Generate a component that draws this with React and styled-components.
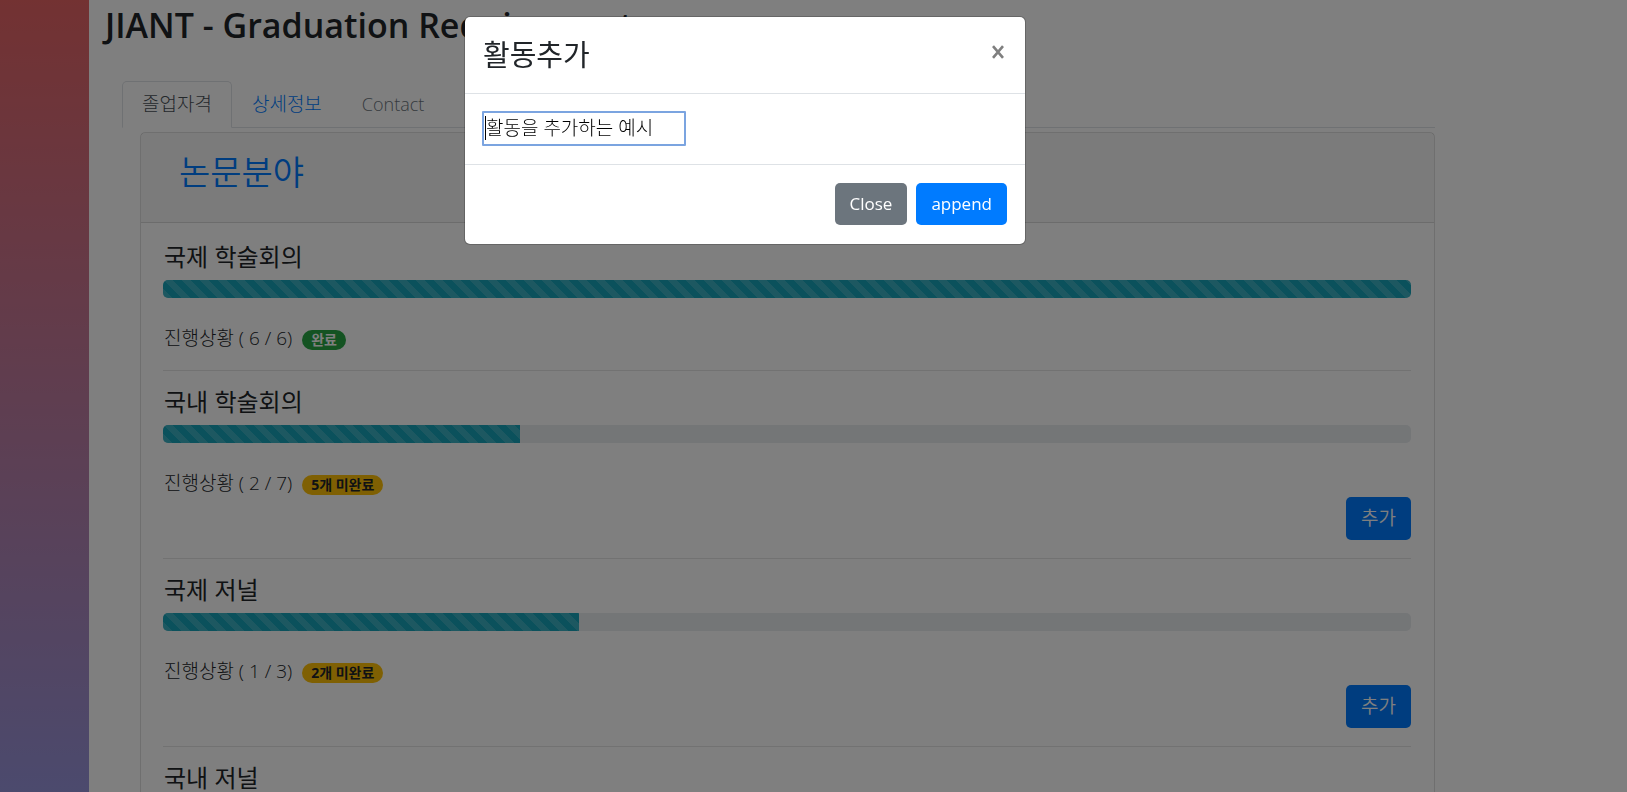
import React, { useEffect, useRef } from "react";
import styled, { createGlobalStyle, css } from "styled-components";

const GlobalStyle = createGlobalStyle`
  *, *::before, *::after { box-sizing: border-box; }
  body {
    margin: 0;
    height: 100vh;
    overflow: hidden;
    background: #fff;
    color: #212529;
    font-family: "Open Sans", "Noto Sans CJK KR", sans-serif;
    font-size: 18px;
    line-height: 27px;
  }
`;

const Page = styled.div`
  display: flex;
  height: 100vh;
  overflow: hidden;
`;

const Sidebar = styled.aside`
  flex: 0 0 89px;
  background: linear-gradient(#e66465, #9198e5 108%);
`;

const Main = styled.main`
  flex: 1;
  min-width: 0;
  padding: 3px 192px 0 15px;
`;

const PageTitle = styled.h1`
  margin: 0 0 34px 1px;
  font-size: 34px;
  font-weight: 600;
  line-height: 44px;
  white-space: nowrap;
`;

const Tabs = styled.nav`
  display: flex;
  margin: 0 0 4px 18px;
  border-bottom: 1px solid #dee2e6;
`;

const Tab = styled.a`
  margin-bottom: -1px;
  padding: 9px 19px;
  border: 1px solid transparent;
  border-radius: 5px 5px 0 0;
  color: #007bff;
  font-size: ${(p) => (p.$latin ? 18 : 19)}px;
  font-weight: 300;
  line-height: 27px;
  text-decoration: none;
  ${(p) => p.$disabled && css`color: #6c757d;`}
  ${(p) =>
    p.$active &&
    css`
      color: #495057;
      background: #fff;
      border-color: #dee2e6 #dee2e6 #fff;
    `}
`;

const Card = styled.section`
  margin-left: 36px;
  border: 1px solid rgba(0, 0, 0, 0.125);
  border-radius: 5px;
`;

const CardHeader = styled.header`
  height: 90px;
  padding: 14px 22px;
  background: rgba(0, 0, 0, 0.03);
  border-bottom: 1px solid rgba(0, 0, 0, 0.125);
`;

const HeaderButton = styled.button`
  padding: 6px 15px;
  border: 1px solid transparent;
  background: transparent;
  color: #007bff;
  font-family: inherit;
  font-size: 34px;
  font-weight: 350;
  line-height: 36px;
`;

const CardBody = styled.div`
  padding: 20px 23px 20px 22px;
`;

const Item = styled.article`
  & + & {
    margin-top: 18px;
    padding-top: 17px;
    border-top: 1px solid rgba(0, 0, 0, 0.1);
  }
`;

const ItemTitle = styled.h2`
  margin: 0 0 10px 1px;
  font-size: 24px;
  font-weight: 400;
  line-height: 27px;
`;

const Track = styled.div`
  height: 18px;
  margin-bottom: 27px;
  overflow: hidden;
  background: #e9ecef;
  border-radius: 5px;
`;

const Bar = styled.div`
  height: 100%;
  background: #17a2b8
    linear-gradient(
      45deg,
      rgba(255, 255, 255, 0.15) 25%,
      transparent 25%,
      transparent 50%,
      rgba(255, 255, 255, 0.15) 50%,
      rgba(255, 255, 255, 0.15) 75%,
      transparent 75%,
      transparent
    );
  background-size: 18px 18px;
`;

const Status = styled.p`
  display: flex;
  align-items: center;
  gap: 10px;
  margin: 0 0 0 1px;
  font-size: 19px;
  font-weight: 300;
  line-height: 27px;
`;

const Badge = styled.span`
  margin-top: 2px;
  padding: 0 9px;
  border-radius: 10px;
  background: ${(p) => (p.$done ? "#28a745" : "#ffc107")};
  color: ${(p) => (p.$done ? "#fff" : "#212529")};
  font-size: 14px;
  font-weight: 700;
  line-height: 20px;
`;

const Actions = styled.div`
  display: flex;
  justify-content: flex-end;
`;

const Button = styled.button`
  padding: 7px 14px;
  border: 1px solid transparent;
  border-radius: 5px;
  background: ${(p) => (p.$secondary ? "#6c757d" : "#007bff")};
  color: #fff;
  font-family: inherit;
  font-size: 17px;
  line-height: 26px;
`;

const AddButton = styled(Button)`
  font-size: 19px;
  font-weight: 350;
  line-height: 27px;
`;

const Backdrop = styled.div`
  position: fixed;
  inset: 0;
  padding: 16px 137px 16px 0;
  background: rgba(0, 0, 0, 0.5);
`;

const Dialog = styled.div`
  max-width: 562px;
  margin: 0 auto;
  background: #fff;
  background-clip: padding-box;
  border: 1px solid rgba(0, 0, 0, 0.2);
  border-radius: 6px;
`;

const DialogHeader = styled.header`
  display: flex;
  justify-content: space-between;
  align-items: flex-start;
  padding: 18px;
  border-bottom: 1px solid #dee2e6;
`;

const DialogTitle = styled.h2`
  margin: 0;
  font-size: 29px;
  font-weight: 400;
  line-height: 40px;
`;

const CloseIcon = styled.button`
  display: flex;
  padding: 10px 3px;
  border: 0;
  background: transparent;
  color: #7f7f7f;
`;

const DialogBody = styled.div`
  display: flex;
  padding: 17px 17px 18px;
`;

/* The text cursor is painted at the start of the field so that it does not blink. */
const TextInput = styled.input`
  width: 204px;
  height: 35px;
  padding: 0 2px 4px;
  border: 2px solid #7ba4e0;
  border-radius: 1px;
  outline: none;
  background: linear-gradient(#000, #000) 1px 3px / 1px 24px no-repeat #fff;
  caret-color: transparent;
  color: #000;
  font-family: inherit;
  font-size: 19px;
  font-weight: 300;
`;

const DialogFooter = styled.footer`
  display: flex;
  justify-content: flex-end;
  gap: 9px;
  padding: 18px 18px 19px;
  border-top: 1px solid #dee2e6;
`;

const items = [
  { name: "국제 학술회의", done: 6, total: 6 },
  { name: "국내 학술회의", done: 2, total: 7 },
  { name: "국제 저널", done: 1, total: 3 },
  { name: "국내 저널", done: 1, total: 3 },
];

function Requirement({ name, done, total }) {
  const complete = done === total;
  return (
    <Item>
      <ItemTitle>{name}</ItemTitle>
      <Track role="progressbar" aria-label={name} aria-valuenow={done} aria-valuemax={total}>
        <Bar style={{ width: `${(done / total) * 100}%` }} />
      </Track>
      <Status>
        {`진행상황 ( ${done} / ${total})`}
        <Badge $done={complete}>{complete ? "완료" : `${total - done}개 미완료`}</Badge>
      </Status>
      {!complete && (
        <Actions>
          <AddButton type="button">추가</AddButton>
        </Actions>
      )}
    </Item>
  );
}

function AddActivityDialog() {
  const input = useRef(null);
  useEffect(() => {
    input.current.focus();
    input.current.setSelectionRange(0, 0);
  }, []);
  return (
    <Backdrop>
      <Dialog role="dialog" aria-modal="true" aria-labelledby="dialog-title">
        <DialogHeader>
          <DialogTitle id="dialog-title">활동추가</DialogTitle>
          <CloseIcon type="button" aria-label="Close">
            <svg width="12" height="14" viewBox="0 0 12 14" fill="none" stroke="currentColor" strokeWidth="2.6">
              <path d="M1 1.2 11 12.8M11 1.2 1 12.8" />
            </svg>
          </CloseIcon>
        </DialogHeader>
        <DialogBody>
          <TextInput ref={input} aria-labelledby="dialog-title" defaultValue="활동을 추가하는 예시" />
        </DialogBody>
        <DialogFooter>
          <Button type="button" $secondary>Close</Button>
          <Button type="button">append</Button>
        </DialogFooter>
      </Dialog>
    </Backdrop>
  );
}

export default function App() {
  return (
    <>
      <GlobalStyle />
      <Page>
        <Sidebar />
        <Main>
          <PageTitle>JIANT - Graduation Requirements</PageTitle>
          <Tabs>
            <Tab href="#status" $active>졸업자격</Tab>
            <Tab href="#details">상세정보</Tab>
            <Tab href="#contact" $disabled $latin>Contact</Tab>
          </Tabs>
          <Card>
            <CardHeader>
              <HeaderButton type="button">논문분야</HeaderButton>
            </CardHeader>
            <CardBody>
              {items.map((item) => (
                <Requirement key={item.name} {...item} />
              ))}
            </CardBody>
          </Card>
        </Main>
      </Page>
      <AddActivityDialog />
    </>
  );
}
